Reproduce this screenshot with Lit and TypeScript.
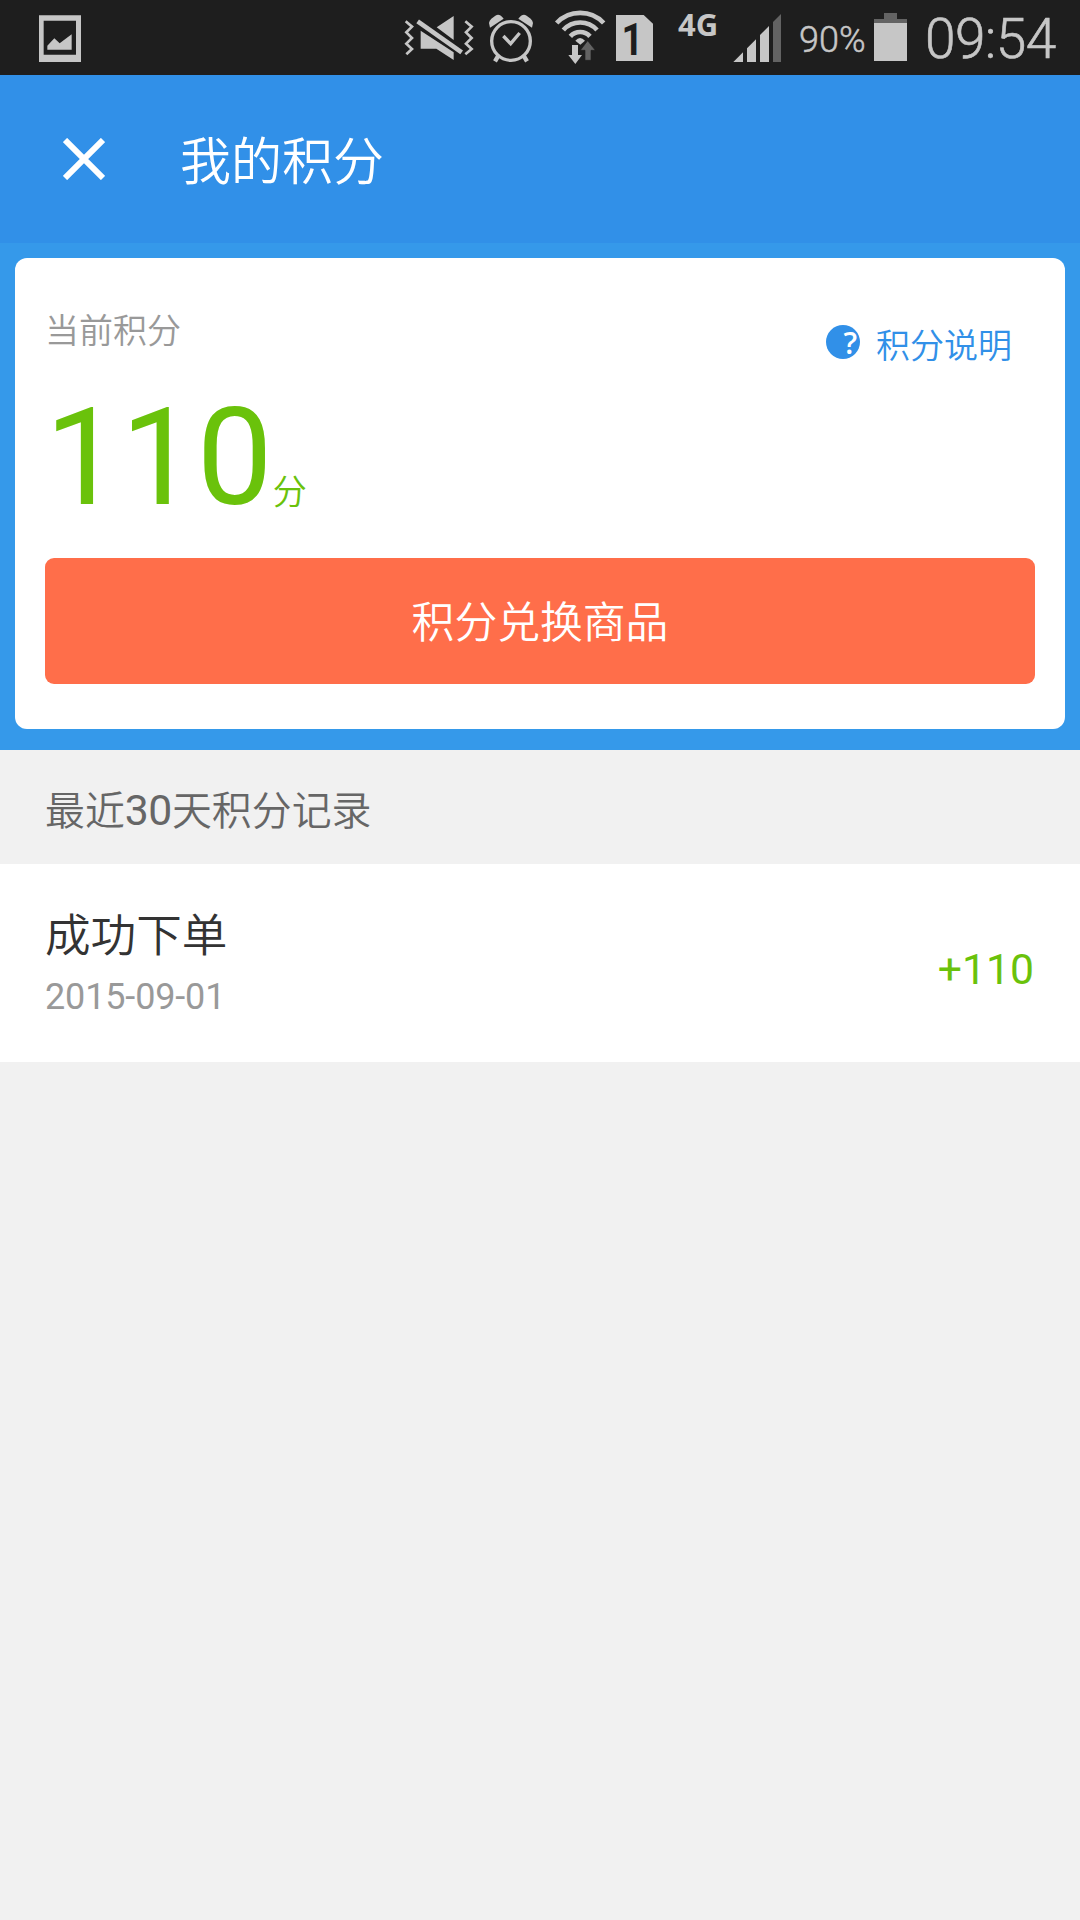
import { LitElement, html, css } from "lit";
import { customElement, property } from "lit/decorators.js";

@customElement("status-bar")
class StatusBar extends LitElement {
  static styles = css`
    :host { display: flex; align-items: center; height: 75px; background: #1e1e1e; color: #c6c6c6; font-family: Roboto, sans-serif; }
    svg { display: block; flex: none; height: 75px; fill: #c6c6c6; }
    .line { fill: none; stroke: #c6c6c6; }
    .dim { fill: #636363; }
    .dark { fill: #1e1e1e; }
    .photo { width: 48px; margin-left: 36px; }
    .mute { width: 70px; margin-left: 320px; }
    .alarm { width: 50px; margin-left: 13px; }
    .wifi { width: 52px; margin-left: 17px; }
    .sim { width: 37px; margin-left: 10px; }
    .digit { font: 700 134px Roboto, sans-serif; }
    .net { width: 55px; margin-left: 25px; font: 700 31px/31px "Open Sans", sans-serif; margin-top: -26px; }
    .signal { width: 49px; }
    .pct { width: 67px; margin-left: 17px; font-size: 36px; line-height: 36px; font-weight: 300; padding-top: 4px; -webkit-text-stroke: 0.5px #c6c6c6; }
    .battery { width: 33px; margin-left: 8px; }
    .clock { font-size: 55px; line-height: 55px; font-weight: 300; margin-left: 18px; padding-top: 3px; letter-spacing: -0.6px; -webkit-text-stroke: 0.6px #c6c6c6; }
  `;
  render() {
    return html`
      <svg class="photo" viewBox="108 0 144 225"><path fill-rule="evenodd" d="M117 46H243V186H117ZM131 62V164H228V62Z"/><path d="M142 149V137L163 115L179 130L215 103V149Z"/></svg>
      <svg class="mute" viewBox="42 0 210 225">
        <path class="line" stroke-width="8" d="M47 64L66 80L49 97L66 114L49 131L66 147L49 163M226 64L245 80L228 97L245 114L228 131L245 147L226 163"/>
        <path d="M140 82L191 48V120ZM92 92L191 157V180L139 146H92Z"/>
        <path stroke="#1e1e1e" stroke-width="24" d="M83 64L215 157"/>
        <path class="line" stroke-width="14" d="M83 64L215 157"/>
      </svg>
      <svg class="alarm" viewBox="291 0 150 225">
        <circle class="line" stroke-width="10" cx="363" cy="123" r="58"/>
        <path class="line" stroke-width="10" d="M340 108L362 131L389 99"/>
        <path class="line" stroke-width="13" d="M325 167L315 184M401 167L411 184"/>
        <path d="M300 83L297 69Q298 61 304 56L316 47Q327 41 336 50L341 56ZM426 83L429 69Q428 61 422 56L410 47Q399 41 390 50L385 56Z"/>
      </svg>
      <svg class="wifi" viewBox="492 0 156 225">
        <path class="line" stroke-width="14" d="M500 69A97 97 0 0 1 641 69M520 90A68 68 0 0 1 621 90M541 109A40 40 0 0 1 600 109"/>
        <path d="M556 122Q570 106 585 122L571 134Z"/>
        <path stroke="#1e1e1e" stroke-width="2" class="dim" d="M585 181V151H571L593 122L616 151H603V181Z"/>
        <path d="M546 135H564V165H576L556 192L535 165H546Z"/>
      </svg>
      <svg class="sim" viewBox="48 0 111 225"><path d="M48 45H131L159 71V183H48Z"/><text class="dark digit" transform="scale(0.85 1)" x="76" y="165">1</text></svg>
      <span class="net">4G</span>
      <svg class="signal" viewBox="399 0 147 225"><path d="M400 186L429 157V186ZM441 186V145L468 118V186ZM480 186V105L507 78V186Z"/><path class="dim" d="M519 186V66L543 42V186Z"/></svg>
      <span class="pct">90%</span>
      <svg class="battery" viewBox="252 0 99 225"><path class="dim" d="M252 69V57H282V39H321V57H351V69Z"/><path d="M252 69H351V183H252Z"/></svg>
      <span class="clock">09:54</span>
    `;
  }
}

@customElement("record-row")
class RecordRow extends LitElement {
  @property() name = "";
  @property() date = "";
  @property() points = "";
  static styles = css`
    :host { display: flex; justify-content: space-between; align-items: center; box-sizing: border-box; height: 198px; padding: 0 46px 0 45px; background: #fff; font-family: Roboto, sans-serif; font-weight: 400; }
    .info { display: flex; flex-direction: column; }
    .name { font: 350 45.6px/60px "Noto Sans CJK SC", sans-serif; color: #333; margin-top: -6px; }
    .date { font-size: 36px; line-height: 44px; color: #999; margin-top: 13px; letter-spacing: -0.15px; }
    .points { font-size: 42.7px; line-height: 50px; color: #6ac20b; padding-top: 12px; }
  `;
  render() {
    return html`<div class="info"><span class="name">${this.name}</span><span class="date">${this.date}</span></div><span class="points">${this.points}</span>`;
  }
}

@customElement("app-root")
class AppRoot extends LitElement {
  records = [{ name: "成功下单", date: "2015-09-01", points: "+110" }];
  static styles = css`
    :host { display: flex; flex-direction: column; width: 1080px; height: 1920px; overflow: hidden; background: #f1f1f1; font-family: "Noto Sans CJK SC", sans-serif; font-weight: 350; }
    .header { display: flex; align-items: center; height: 168px; background: #3190e8; color: #fff; }
    .close { display: block; width: 42px; height: 42px; margin-left: 63px; }
    .title { margin-left: 75px; font-size: 51px; line-height: 72px; margin-bottom: 3px; }
    .hero { box-sizing: border-box; height: 507px; padding: 15px 15px 21px; background: #3599ea; }
    .card { box-sizing: border-box; height: 471px; padding: 51px 30px 45px; display: flex; flex-direction: column; background: #fff; border-radius: 12px; }
    .top { display: flex; justify-content: space-between; align-items: flex-start; height: 70px; }
    .label { font-size: 34px; line-height: 40px; color: #999; }
    .help { display: flex; align-items: center; margin: 15px 23px 0 0; color: #3190e8; font-size: 34px; line-height: 40px; }
    .mark { display: block; width: 34px; height: 34px; margin: 0 16px 4px 0; overflow: visible; }
    .q { font: 600 30px "Open Sans", sans-serif; }
    .score { display: flex; align-items: baseline; height: 179px; color: #6ac20b; }
    .num { font: 400 135px/158px Roboto, sans-serif; }
    .unit { font-size: 34px; line-height: 40px; }
    .exchange { height: 126px; border: 0; padding: 0 0 4px; border-radius: 9px; background: #ff6e4a; color: #fff; font: 350 42.8px "Noto Sans CJK SC", sans-serif; }
    .section { display: flex; align-items: baseline; box-sizing: border-box; height: 114px; padding: 30px 45px 0; font-size: 39.9px; line-height: 56px; color: #666; }
    .days { font-family: Roboto, sans-serif; font-size: 42.7px; font-weight: 400; letter-spacing: -0.4px; }
  `;
  render() {
    return html`
      <status-bar></status-bar>
      <div class="header">
        <svg class="close" viewBox="0 0 42 42"><path d="M2 2L40 40M40 2L2 40" stroke="#fff" stroke-width="6"/></svg>
        <span class="title">我的积分</span>
      </div>
      <div class="hero">
        <div class="card">
          <div class="top">
            <span class="label">当前积分</span>
            <div class="help">
              <svg class="mark" viewBox="0 0 34 34"><circle cx="17" cy="17" r="17" fill="#3190e8"/><text class="q" x="17.5" y="29" fill="#fff">?</text></svg>
              <span>积分说明</span>
            </div>
          </div>
          <div class="score"><span class="num">110</span><span class="unit">分</span></div>
          <button class="exchange">积分兑换商品</button>
        </div>
      </div>
      <div class="section"><span>最近</span><span class="days">30</span><span>天积分记录</span></div>
      ${this.records.map((r) => html`<record-row .name=${r.name} .date=${r.date} .points=${r.points}></record-row>`)}
    `;
  }
}
